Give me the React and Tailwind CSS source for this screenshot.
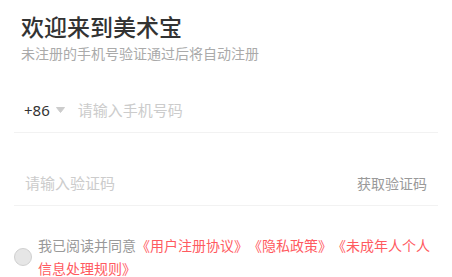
export default function App() {
  const font = { fontFamily: '"Noto Sans CJK SC", "Noto Sans", sans-serif' };
  return (
    <div className="w-[452px] h-[277px] bg-white overflow-hidden" style={font}>
      <div className="pl-[21px] pt-[10px]">
        <div className="text-[23px] leading-[32px] font-medium text-[#333333]">欢迎来到美术宝</div>
        <div className="mt-[2px] text-[14px] leading-[18px] text-[#aaaaaa]">未注册的手机号验证通过后将自动注册</div>
      </div>
      <div className="mx-[14px] mt-[26px] h-[45px] flex items-center border-b border-[#f2f2f2] pl-[10px]">
        <span className="text-[15px] text-[#333333]" style={{ fontFamily: '"Noto Sans", sans-serif' }}>+86</span>
        <svg className="ml-[6px]" width="9" height="6" viewBox="0 0 9 6">
          <path d="M0.5 0.5 L8.5 0.5 L4.5 5.5 Z" fill="#cccccc" stroke="#cccccc" strokeLinejoin="round" />
        </svg>
        <span className="ml-[13px] text-[15px] text-[#cccccc]">请输入手机号码</span>
      </div>
      <div className="mx-[14px] mt-[29px] h-[44px] flex items-center justify-between border-b border-[#f2f2f2] pl-[11px] pr-[11px]">
        <span className="text-[15px] text-[#cccccc]">请输入验证码</span>
        <span className="text-[14px] text-[#999999]">获取验证码</span>
      </div>
      <div className="mt-[28px] flex items-center pl-[14px] pr-[14px]">
        <div className="w-[18px] h-[18px] shrink-0 rounded-full bg-[#e6e6e6] border border-[#d0d0d0]" />
        <div className="ml-[6px] text-[14px] leading-[23px] text-[#999999] [text-spacing-trim:space-all]">
          我已阅读并同意<span className="text-[#ff5a5f]">《用户注册协议》《隐私政策》《未成年人个人信息处理规则》</span>
        </div>
      </div>
    </div>
  );
}
